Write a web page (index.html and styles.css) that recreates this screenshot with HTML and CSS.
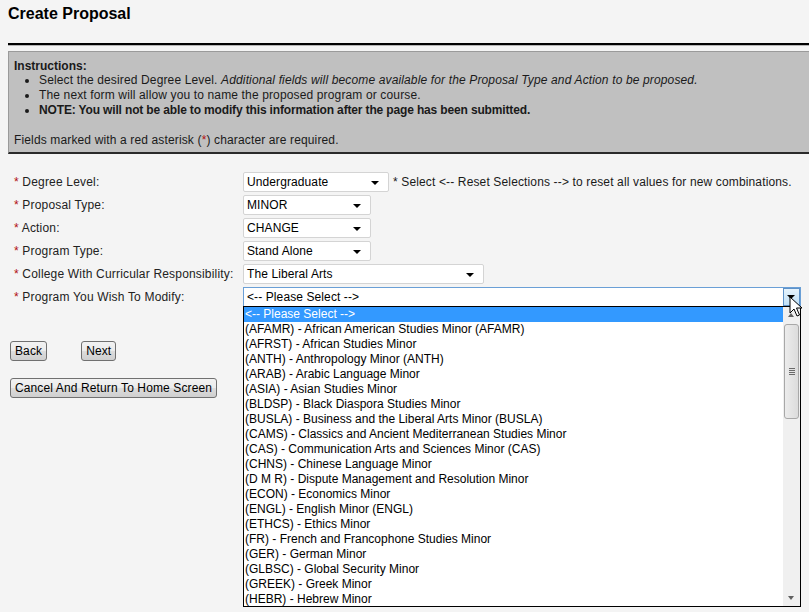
FILE: index.html
```html
<!DOCTYPE html>
<html>
<head>
<meta charset="utf-8">
<link rel="stylesheet" href="styles.css">
</head>
<body>
<div class="page">
  <h1 class="title">Create Proposal</h1>
  <div class="rule"></div>
  <div class="instructions">
    <div class="ins-head">Instructions:</div>
    <ul class="ins-list">
      <li>Select the desired Degree Level. <i>Additional fields will become available for the Proposal Type and Action to be proposed.</i></li>
      <li>The next form will allow you to name the proposed program or course.</li>
      <li><b>NOTE: You will not be able to modify this information after the page has been submitted.</b></li>
    </ul>
    <div class="ins-foot">Fields marked with a red asterisk (<span class="req">*</span>) character are required.</div>
  </div>

  <div class="form">
    <div class="row">
      <div class="label"><span class="req">*</span> Degree Level:</div>
      <div class="field">
        <div class="select w146">Undergraduate<span class="arrow"></span></div>
        <span class="note">* Select &lt;-- Reset Selections --&gt; to reset all values for new combinations.</span>
      </div>
    </div>
    <div class="row">
      <div class="label"><span class="req">*</span> Proposal Type:</div>
      <div class="field"><div class="select w128">MINOR<span class="arrow"></span></div></div>
    </div>
    <div class="row">
      <div class="label"><span class="req">*</span> Action:</div>
      <div class="field"><div class="select w128">CHANGE<span class="arrow"></span></div></div>
    </div>
    <div class="row">
      <div class="label"><span class="req">*</span> Program Type:</div>
      <div class="field"><div class="select w128">Stand Alone<span class="arrow"></span></div></div>
    </div>
    <div class="row">
      <div class="label"><span class="req">*</span> College With Curricular Responsibility:</div>
      <div class="field"><div class="select w241">The Liberal Arts<span class="arrow"></span></div></div>
    </div>
    <div class="row">
      <div class="label"><span class="req">*</span> Program You Wish To Modify:</div>
      <div class="field">
        <div class="select focus w558">&lt;-- Please Select --&gt;<span class="arrow-btn"><span class="arrow-in"></span></span></div>
      </div>
    </div>
  </div>

  <div class="buttons">
    <div class="btn-row">
      <button class="btn">Back</button>
      <button class="btn">Next</button>
    </div>
    <div class="btn-row">
      <button class="btn">Cancel And Return To Home Screen</button>
    </div>
  </div>
</div>

<div class="dropdown">
  <ul class="options">
    <li class="sel">&lt;-- Please Select --&gt;</li>
    <li>(AFAMR) - African American Studies Minor (AFAMR)</li>
    <li>(AFRST) - African Studies Minor</li>
    <li>(ANTH) - Anthropology Minor (ANTH)</li>
    <li>(ARAB) - Arabic Language Minor</li>
    <li>(ASIA) - Asian Studies Minor</li>
    <li>(BLDSP) - Black Diaspora Studies Minor</li>
    <li>(BUSLA) - Business and the Liberal Arts Minor (BUSLA)</li>
    <li>(CAMS) - Classics and Ancient Mediterranean Studies Minor</li>
    <li>(CAS) - Communication Arts and Sciences Minor (CAS)</li>
    <li>(CHNS) - Chinese Language Minor</li>
    <li>(D M R) - Dispute Management and Resolution Minor</li>
    <li>(ECON) - Economics Minor</li>
    <li>(ENGL) - English Minor (ENGL)</li>
    <li>(ETHCS) - Ethics Minor</li>
    <li>(FR) - French and Francophone Studies Minor</li>
    <li>(GER) - German Minor</li>
    <li>(GLBSC) - Global Security Minor</li>
    <li>(GREEK) - Greek Minor</li>
    <li>(HEBR) - Hebrew Minor</li>
  </ul>
  <div class="scrollbar">
    <div class="sb-arrow up"></div>
    <div class="sb-track">
      <div class="thumb"><span class="grip"></span></div>
    </div>
    <div class="sb-arrow down"></div>
  </div>
</div>

<svg class="cursor" width="14" height="22" viewBox="0 0 14 22">
  <path d="M1 1 L1 17 L5 13 L8 20 L10.5 19 L7.5 12 L13 12 Z" fill="#fff" stroke="#000" stroke-width="1" stroke-linejoin="miter"/>
</svg>
</body>
</html>
```

FILE: styles.css
```css
html, body {
  margin: 0;
  padding: 0;
  background: #f4f4f4;
  overflow: hidden;
}
body {
  font-family: "Liberation Sans", Arial, sans-serif;
  font-size: 12px;
  color: #1a1a1a;
  width: 809px;
  height: 612px;
  position: relative;
}
.page {
  padding: 5px 0 0 8px;
}
.title {
  font-size: 16px;
  font-weight: bold;
  line-height: 18px;
  margin: 0;
  color: #000;
}
.rule {
  margin-top: 20px;
  height: 2px;
  background: #000;
  border-bottom: 1px solid #b4b4b4;
  width: 820px;
}
.instructions {
  margin-top: 5px;
  width: 820px;
  background: #c0c0c0;
  border-top: 1px solid #9a9a9a;
  border-left: 1px solid #9a9a9a;
  border-bottom: 2px solid #2a2a2a;
  padding: 7px 5px 4px 5px;
  line-height: 15px;
  box-sizing: border-box;
  letter-spacing: 0.14px;
}
.ins-head {
  font-weight: bold;
  line-height: 14px;
  letter-spacing: 0;
}
.ins-list {
  margin: 0 0 15px 0;
  padding-left: 25px;
}
.ins-list li {
  line-height: 15px;
}
.ins-list b {
  letter-spacing: -0.15px;
}
.req {
  color: #b01010;
}
.form {
  margin-top: 18px;
  padding-left: 6px;
  display: flex;
  flex-direction: column;
  gap: 3px;
}
.row {
  display: flex;
  align-items: center;
  height: 20px;
}
.label {
  width: 229px;
  flex: none;
  color: #222;
  letter-spacing: 0.18px;
}
.note {
  letter-spacing: 0.14px;
}
.field {
  display: flex;
  align-items: center;
  gap: 4px;
}
.select {
  position: relative;
  box-sizing: border-box;
  height: 20px;
  line-height: 18px;
  background: #fff;
  border: 1px solid #d4d4d4;
  border-radius: 2px;
  padding-left: 3px;
  color: #000;
  letter-spacing: 0.1px;
}
.w146 { width: 146px; }
.w128 { width: 128px; }
.w241 { width: 241px; }
.w558 { width: 558px; }
.arrow {
  position: absolute;
  right: 9px;
  top: 8px;
  width: 0;
  height: 0;
  border-left: 4px solid transparent;
  border-right: 4px solid transparent;
  border-top: 4px solid #000;
}
.select.focus {
  border: 1px solid #6a9fd6;
  border-radius: 0;
}
.arrow-btn {
  position: absolute;
  right: 0;
  top: 0;
  width: 15px;
  height: 16px;
  border: 1px solid #5e92c8;
  background: linear-gradient(#e6f3fc, #bfe0f7);
  box-sizing: content-box;
}
.arrow-in {
  position: absolute;
  left: 3px;
  top: 6px;
  width: 0;
  height: 0;
  border-left: 4px solid transparent;
  border-right: 4px solid transparent;
  border-top: 4px solid #000;
}
.buttons {
  margin-top: 34px;
  padding-left: 2px;
  display: flex;
  flex-direction: column;
  gap: 17px;
}
.btn-row {
  display: flex;
  gap: 34px;
}
.btn {
  font-family: "Liberation Sans", Arial, sans-serif;
  font-size: 12px;
  color: #000;
  height: 20px;
  padding: 0 4px;
  border: 1px solid #707070;
  border-radius: 3px;
  background: linear-gradient(#f2f2f2 0%, #ebebeb 50%, #dddddd 51%, #cfcfcf 100%);
  line-height: 18px;
  letter-spacing: 0.12px;
}
.dropdown {
  position: absolute;
  left: 243px;
  top: 306px;
  width: 558px;
  height: 301px;
  box-sizing: border-box;
  border: 1px solid #000;
  background: #fff;
  display: flex;
}
.options {
  list-style: none;
  margin: 0;
  padding: 0;
  flex: 1;
  color: #000;
}
.options li {
  height: 15px;
  line-height: 15px;
  padding-left: 1px;
  white-space: nowrap;
}
.options li.sel {
  background: #3399ff;
  color: #fff;
}
.scrollbar {
  width: 17px;
  flex: none;
  background: #f0f0f0;
  display: flex;
  flex-direction: column;
}
.sb-arrow {
  height: 17px;
  position: relative;
}
.sb-arrow.down::after {
  content: "";
  position: absolute;
  left: 5px;
  top: 7px;
  border-left: 3.5px solid transparent;
  border-right: 3.5px solid transparent;
  border-top: 4px solid #606060;
}
.sb-arrow.up::after {
  content: "";
  position: absolute;
  left: 5px;
  top: 6px;
  border-left: 3.5px solid transparent;
  border-right: 3.5px solid transparent;
  border-bottom: 4px solid #606060;
}
.sb-track {
  flex: 1;
  padding: 0 1px;
}
.thumb {
  height: 95px;
  box-sizing: border-box;
  border: 1px solid #a8a8a8;
  border-radius: 3px;
  background: linear-gradient(90deg, #ececec, #dcdcdc);
  position: relative;
}
.grip {
  position: absolute;
  left: 4px;
  top: 43px;
  width: 6px;
  height: 7px;
  background: repeating-linear-gradient(#6a6a6a 0 1px, transparent 1px 2px);
}
.cursor {
  position: absolute;
  left: 789px;
  top: 296px;
}
```
